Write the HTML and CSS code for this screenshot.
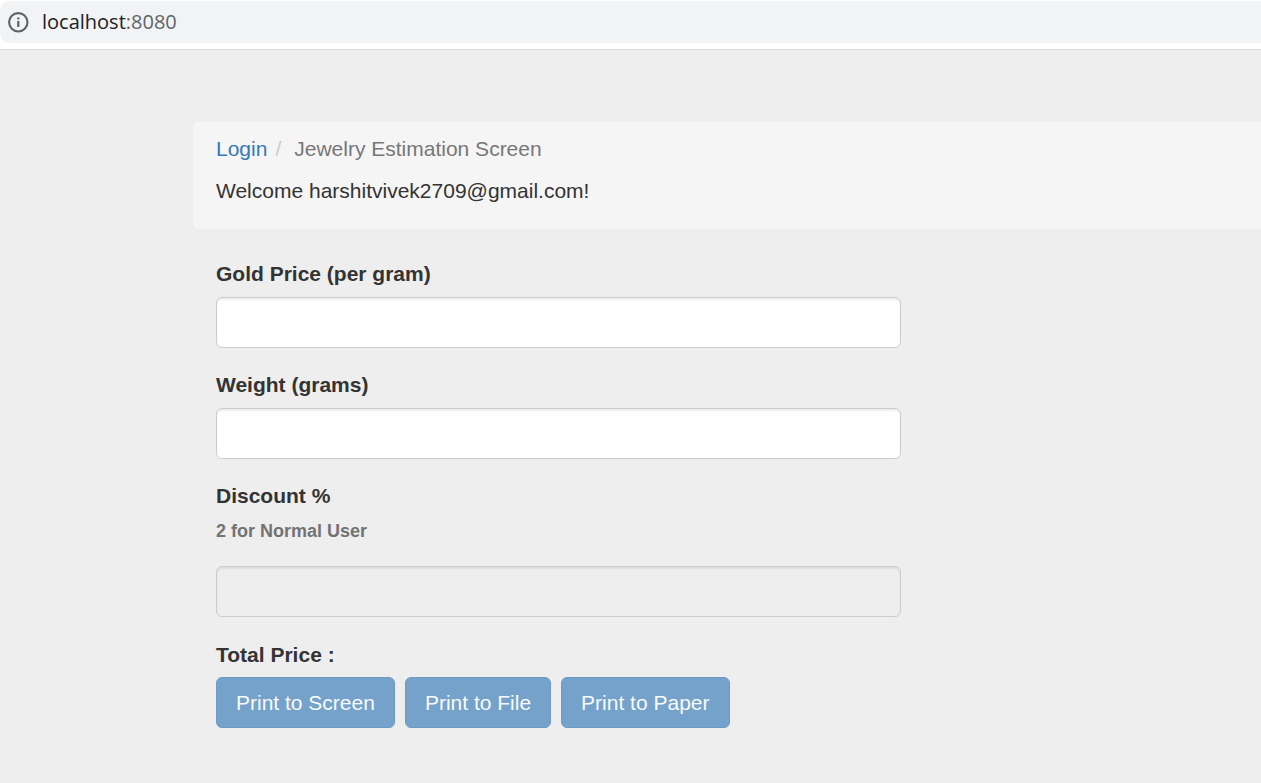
FILE: index.html
```html
<!DOCTYPE html>
<html lang="en">
<head>
<meta charset="utf-8">
<title>Jewelry Estimation Screen</title>
<link rel="stylesheet" href="styles.css">
</head>
<body>
<header class="browser-bar">
  <div class="address">
    <svg class="info-icon" viewBox="0 0 22 22" aria-hidden="true"><circle cx="11.3" cy="11.3" r="9.2" fill="none" stroke="#5f6368" stroke-width="2.1"/><path d="M11.3 10v6M11.3 6.4v2.2" stroke="#5f6368" stroke-width="2.2"/></svg>
    <span class="host">localhost<span class="port">:8080</span></span>
  </div>
</header>
<main class="page">
  <div class="banner">
    <nav class="breadcrumb" aria-label="Breadcrumb">
      <a class="crumb-link" href="#">Login</a>
      <span class="divider">/</span>
      <span class="current">Jewelry Estimation Screen</span>
    </nav>
    <p class="welcome">Welcome harshitvivek2709@gmail.com!</p>
  </div>
  <form class="form">
    <div class="field">
      <label class="label" for="price">Gold Price (per gram)</label>
      <input class="control" id="price" type="text">
    </div>
    <div class="field">
      <label class="label" for="weight">Weight (grams)</label>
      <input class="control" id="weight" type="text">
    </div>
    <div class="field">
      <label class="label" for="discount">Discount %</label>
      <p class="hint">2 for Normal User</p>
      <input class="control" id="discount" type="text" disabled>
    </div>
    <p class="total">Total Price :</p>
    <div class="actions">
      <button class="button" type="button" disabled>Print to Screen</button>
      <button class="button" type="button" disabled>Print to File</button>
      <button class="button" type="button" disabled>Print to Paper</button>
    </div>
  </form>
</main>
</body>
</html>
```
FILE: styles.css
```css
* {
  box-sizing: border-box;
}

body {
  margin: 0;
  background: #eee;
  color: #333;
  font: 21px/30px "Liberation Sans", Arial, sans-serif;
  overflow-x: hidden;
}

p {
  margin: 0;
}

.browser-bar {
  height: 50px;
  padding-top: 1px;
  background: #fff;
  border-bottom: 1px solid #dadce0;
}

.address {
  display: flex;
  align-items: center;
  gap: 13px;
  height: 42px;
  padding-left: 7px;
  background: #f1f3f4;
  border-radius: 10px 0 0 10px;
}

.info-icon {
  width: 22px;
  height: 22px;
}

.host {
  color: #202124;
  font-family: "Open Sans", "Noto Sans", sans-serif;
  font-size: 20px;
}

.port {
  color: #5f6368;
}

.page {
  padding: 72px 0 48px 193px;
}

.banner {
  padding: 12px 23px 23px;
  background: #f5f5f5;
  border-radius: 6px 0 0 6px;
}

.breadcrumb {
  display: flex;
}

.crumb-link {
  color: #337ab7;
  text-decoration: none;
}

.divider {
  padding: 0 13px 0 8px;
  color: #ccc;
}

.current {
  color: #777;
}

.welcome {
  margin-top: 12px;
}

.form {
  max-width: 731px;
  padding: 30px 23px 0;
}

.field {
  margin-bottom: 22px;
}

.label,
.total {
  display: block;
  font-weight: bold;
}

.total {
  margin-top: 23px;
}

.control {
  display: block;
  width: 100%;
  height: 51px;
  margin-top: 8px;
  padding: 9px 18px;
  background: #fff;
  border: 1px solid #ccc;
  border-radius: 6px;
  box-shadow: inset 0 2px 2px rgba(0, 0, 0, 0.07);
  font: inherit;
}

.control:disabled {
  background: #eee;
}

.hint {
  margin: 7px 0 22px;
  color: #737373;
  font-size: 18px;
  font-weight: bold;
  line-height: 26px;
}

.actions {
  display: flex;
  gap: 10px;
  margin-top: 7px;
}

.button {
  height: 51px;
  padding: 0 19px;
  background: #75a2ca;
  border: 1px solid #6d9bc5;
  border-radius: 6px;
  color: #f8fafc;
  font: inherit;
}
```
